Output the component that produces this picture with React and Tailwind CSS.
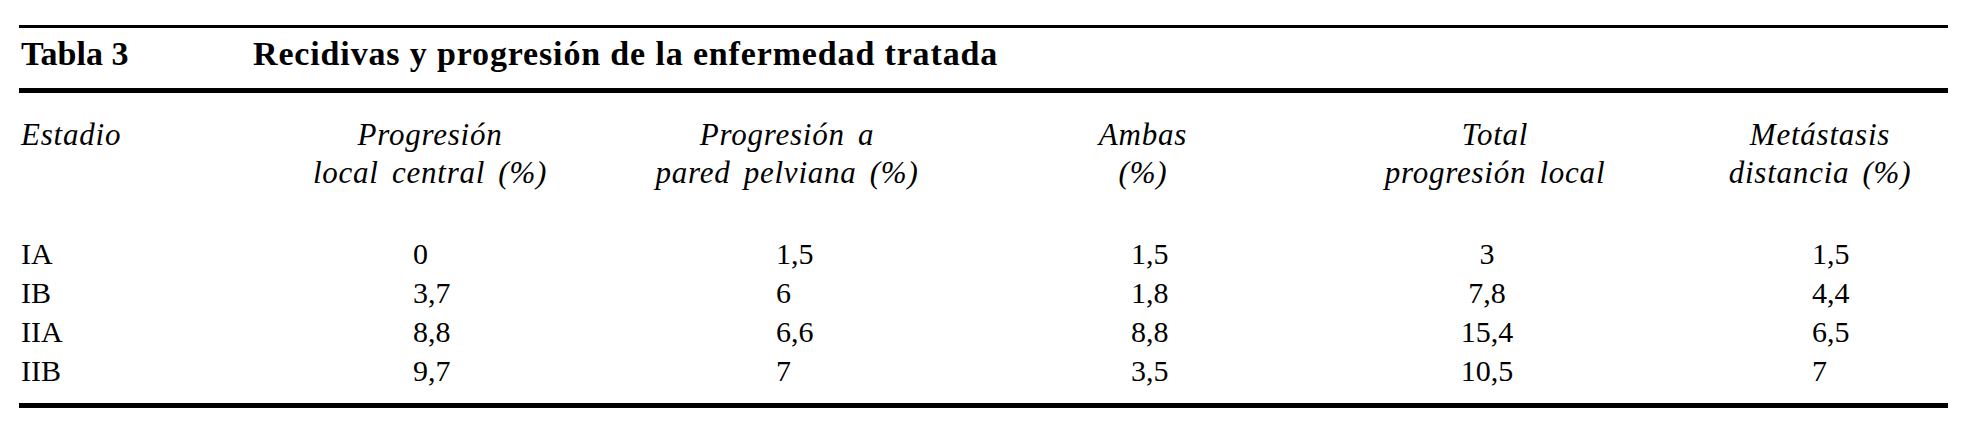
import React from "react";

const rows = [
  ["IA", "0", "1,5", "1,5", "3", "1,5"],
  ["IB", "3,7", "6", "1,8", "7,8", "4,4"],
  ["IIA", "8,8", "6,6", "8,8", "15,4", "6,5"],
  ["IIB", "9,7", "7", "3,5", "10,5", "7"],
];

const cols = "grid grid-cols-[231px_360px_354px_358px_330px_296px]";

export default function App() {
  return (
    <div className="w-[1968px] h-[432px] bg-white pt-[25px] pl-[19px] text-black font-['Liberation_Serif',serif]">
      <div className="w-[1929px] border-t-[3px] border-b-[5px] border-black">
        {/* title */}
        <div className="flex h-[65px] pt-[9px] border-b-[5px] border-black text-[34px] leading-none font-bold">
          <div className="w-[234px] pl-[2px]">Tabla 3</div>
          <div className="tracking-[0.025em]">Recidivas y progresión de la enfermedad tratada</div>
        </div>

        {/* column headings */}
        <div className={`${cols} pt-[23px] italic text-[31px] leading-[38px] tracking-[0.025em] [word-spacing:0.15em]`}>
          <div className="pl-[2px]">Estadio</div>
          <div className="text-center">Progresión<br />local central (%)</div>
          <div className="text-center">Progresión a<br />pared pelviana (%)</div>
          <div className="text-center">Ambas<br />(%)</div>
          <div className="text-center pl-[16px]">Total<br />progresión local</div>
          <div className="text-center pl-[40px]">Metástasis<br />distancia (%)</div>
        </div>

        {/* data */}
        <div className="pt-[42px] pb-[13px] text-[30px] leading-[39px]">
          {rows.map((r) => (
            <div key={r[0]} className={cols}>
              <div className="pl-[2px]">{r[0]}</div>
              <div className="pl-[163px]">{r[1]}</div>
              <div className="pl-[166px]">{r[2]}</div>
              <div className="pl-[167px]">{r[3]}</div>
              <div className="text-center">{r[4]}</div>
              <div className="pl-[160px]">{r[5]}</div>
            </div>
          ))}
        </div>
      </div>
    </div>
  );
}
